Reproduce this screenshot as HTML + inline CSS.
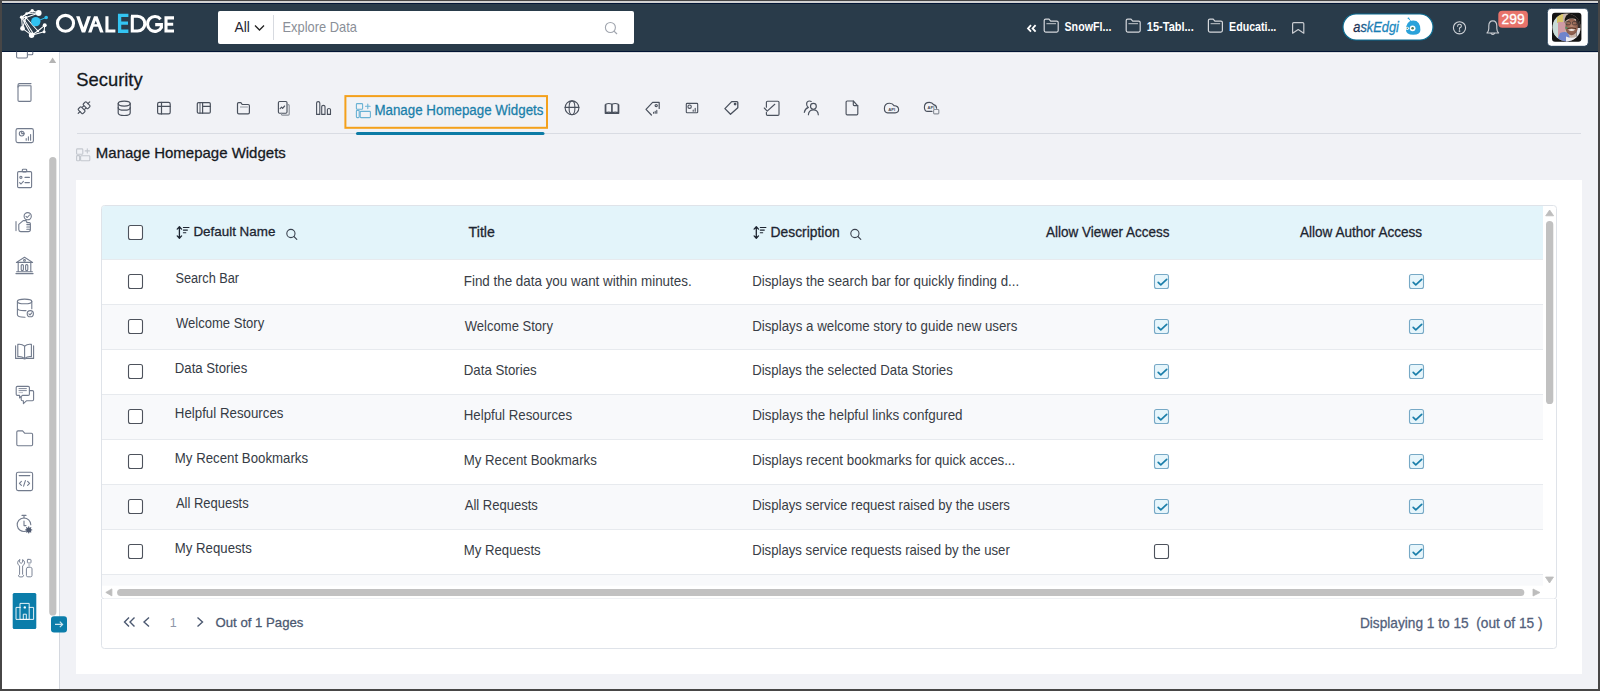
<!DOCTYPE html>
<html><head><meta charset="utf-8"><title>OvalEdge - Manage Homepage Widgets</title>
<style>html,body{margin:0;padding:0;width:1600px;height:691px;overflow:hidden;background:#f1f2f6}
svg{display:block;font-family:"Liberation Sans",sans-serif}</style></head>
<body><svg width="1600" height="691" viewBox="0 0 1600 691">
<rect x="0" y="0" width="1600" height="691" fill="#474646" rx="0" />
<rect x="2" y="1" width="1596" height="2" fill="#d2d2d2" rx="0" />
<rect x="2" y="3" width="1596" height="49" fill="#021535" rx="0" />
<rect x="2" y="4" width="1596" height="47" fill="#293b4a" rx="0" />
<rect x="2" y="52" width="57" height="637" fill="#ffffff" rx="0" />
<rect x="59" y="52" width="1" height="637" fill="#d4d8df" rx="0" />
<rect x="60" y="52" width="1538" height="637" fill="#f1f2f6" rx="0" />
<rect x="60" y="52" width="1538" height="1" fill="#dadcdf" rx="0" />
<rect x="60" y="53" width="1538" height="1" fill="#f8f9fb" rx="0" />
<rect x="218" y="11" width="416" height="33" fill="#ffffff" rx="2" />
<text transform="matrix(0.9731 0 0 1 234.50 31.8)" font-size="14.20" font-weight="400" fill="#1f2430"  xml:space="preserve">All</text>
<path d="M255 25.5 L259.5 30 L264 25.5" fill="none" stroke="#222" stroke-width="1.3"/>
<rect x="273" y="15" width="1" height="25" fill="#d7dae0" rx="0" />
<text transform="matrix(0.9358 0 0 1 282.47 32)" font-size="13.77" font-weight="400" fill="#8a8f98"  xml:space="preserve">Explore Data</text>
<circle cx="610.4" cy="27.5" r="5" fill="none" stroke="#a0a5ae" stroke-width="1.1"/><line x1="614" y1="31.1" x2="617" y2="34" stroke="#a0a5ae" stroke-width="1.2"/>
<text transform="matrix(0.8606 0 0 1 1064.49 30.6)" font-size="12.43" font-weight="700" fill="#ffffff"  xml:space="preserve">SnowFl...</text>
<text transform="matrix(0.8859 0 0 1 1146.84 30.6)" font-size="12.43" font-weight="700" fill="#ffffff"  xml:space="preserve">15-Tabl...</text>
<text transform="matrix(0.8554 0 0 1 1229.11 30.6)" font-size="12.43" font-weight="700" fill="#ffffff"  xml:space="preserve">Educati...</text>
<rect x="1343" y="14" width="90" height="26" fill="#ffffff" rx="13" stroke="#0b6c92" stroke-width="1.2"/>
<defs><linearGradient id="askg" x1="0" y1="0" x2="1" y2="0"><stop offset="0" stop-color="#17203c"/><stop offset="0.14" stop-color="#1a3f6a"/><stop offset="0.3" stop-color="#1a78ae"/><stop offset="1" stop-color="#188ac2"/></linearGradient></defs>
<text transform="matrix(0.9233 0 0 1 1353.24 32)" font-size="13.91" font-weight="400" font-style="italic" stroke="url(#askg)" stroke-width="0.28" fill="url(#askg)"  xml:space="preserve">askEdgi</text>
<rect x="1498.3" y="10.7" width="29.6" height="17.1" fill="#e8736b" rx="4" />
<text transform="matrix(0.9567 0 0 1 1501.51 23.5)" font-size="14.49" font-weight="400" stroke="#ffffff" stroke-width="0.28" fill="#ffffff"  xml:space="preserve">299</text>
<rect x="1547.3" y="8.3" width="41" height="38" rx="4" fill="#ffffff" stroke="#0d2a44" stroke-width="0.8"/>
<rect x="1552" y="12.7" width="29.4" height="29.1" fill="#141414" rx="3" />
<text transform="matrix(1.0072 0 0 1 76.26 85.9)" font-size="18.26" font-weight="400" stroke="#15191e" stroke-width="0.28" fill="#15191e"  xml:space="preserve">Security</text>
<rect x="77" y="133" width="1504" height="1" fill="#d9dce3" rx="0" />
<rect x="356" y="132" width="188.5" height="3" fill="#0d7ca6" rx="1.5" />
<rect x="345.4" y="96.1" width="201.6" height="31.7" fill="none" stroke="#f4a11c" stroke-width="2"/>
<text transform="matrix(0.8861 0 0 1 374.43 114.8)" font-size="15.07" font-weight="400" stroke="#1a7faa" stroke-width="0.28" fill="#1a7faa"  xml:space="preserve">Manage Homepage Widgets</text>
<text transform="matrix(0.9766 0 0 1 95.80 158.1)" font-size="15.36" font-weight="400" stroke="#16191e" stroke-width="0.28" fill="#16191e"  xml:space="preserve">Manage Homepage Widgets</text>
<rect x="76" y="180" width="1506" height="494" fill="#ffffff" rx="0" />
<rect x="101.5" y="205.5" width="1455" height="393.5" rx="3" fill="#ffffff" stroke="#dfe3e9" stroke-width="1"/>
<path d="M102 259 V208.5 Q102 206 104.5 206 H1543 V259 Z" fill="#e3f4fa"/>
<rect x="102" y="304.5" width="1441" height="45" fill="#f8f9fb" rx="0" />
<rect x="102" y="394.5" width="1441" height="45" fill="#f8f9fb" rx="0" />
<rect x="102" y="484.5" width="1441" height="45" fill="#f8f9fb" rx="0" />
<rect x="102" y="574.5" width="1441" height="11.2" fill="#f8f9fb" rx="0" />
<rect x="102" y="259.0" width="1441" height="1" fill="#e7eaee" rx="0" />
<rect x="102" y="304.0" width="1441" height="1" fill="#e7eaee" rx="0" />
<rect x="102" y="349.0" width="1441" height="1" fill="#e7eaee" rx="0" />
<rect x="102" y="394.0" width="1441" height="1" fill="#e7eaee" rx="0" />
<rect x="102" y="439.0" width="1441" height="1" fill="#e7eaee" rx="0" />
<rect x="102" y="484.0" width="1441" height="1" fill="#e7eaee" rx="0" />
<rect x="102" y="529.0" width="1441" height="1" fill="#e7eaee" rx="0" />
<rect x="102" y="574.0" width="1441" height="1" fill="#e7eaee" rx="0" />
<path d="M101.5 599 V645.5 Q101.5 648.5 104.5 648.5 H1553.5 Q1556.5 648.5 1556.5 645.5 V599" fill="#ffffff" stroke="#dfe3e9" stroke-width="1"/>
<path d="M1545.7 215.8 L1553.6 215.8 L1549.65 210 Z" fill="#bdbdbd" stroke="#bdbdbd" stroke-width="0.8" stroke-linejoin="round"/>
<rect x="1546" y="221" width="7.3" height="183" fill="#c1c1c1" rx="3.6" />
<path d="M1545.5 577 L1553.5 577 L1549.5 583 Z" fill="#bdbdbd" stroke="#bdbdbd" stroke-width="0.8" stroke-linejoin="round"/>
<path d="M111.9 588.9 L111.9 595.9 L105.8 592.4 Z" fill="#bdbdbd" stroke="#bdbdbd" stroke-width="0.8" stroke-linejoin="round"/>
<rect x="117.1" y="588.9" width="1407.2" height="7" fill="#c1c1c1" rx="3.5" />
<path d="M1533 589 L1533 596 L1540 592.5 Z" fill="#bdbdbd" stroke="#bdbdbd" stroke-width="0.8" stroke-linejoin="round"/>
<rect x="128.5" y="225.5" width="14" height="14" rx="2" fill="#ffffff" stroke="#4d525c" stroke-width="1.1"/>
<text transform="matrix(1.0066 0 0 1 193.43 236.4)" font-size="13.33" font-weight="400" stroke="#1d2430" stroke-width="0.28" fill="#1d2430"  xml:space="preserve">Default Name</text>
<text transform="matrix(1.0100 0 0 1 468.62 236.9)" font-size="14.06" font-weight="400" stroke="#1d2430" stroke-width="0.28" fill="#1d2430"  xml:space="preserve">Title</text>
<text transform="matrix(1.0046 0 0 1 770.59 236.6)" font-size="13.77" font-weight="400" stroke="#1d2430" stroke-width="0.28" fill="#1d2430"  xml:space="preserve">Description</text>
<text transform="matrix(0.9814 0 0 1 1046.00 236.7)" font-size="13.77" font-weight="400" stroke="#1d2430" stroke-width="0.28" fill="#1d2430"  xml:space="preserve">Allow Viewer Access</text>
<text transform="matrix(0.9858 0 0 1 1300.00 236.7)" font-size="13.77" font-weight="400" stroke="#1d2430" stroke-width="0.28" fill="#1d2430"  xml:space="preserve">Allow Author Access</text>
<rect x="128.5" y="274.5" width="14" height="14" rx="2" fill="#ffffff" stroke="#4d525c" stroke-width="1.1"/>
<text transform="matrix(0.9069 0 0 1 175.39 283.4)" font-size="14.06" font-weight="400" fill="#353b45"  xml:space="preserve">Search Bar</text>
<text transform="matrix(0.9448 0 0 1 463.73 285.7)" font-size="14.20" font-weight="400" fill="#383d46"  xml:space="preserve">Find the data you want within minutes.</text>
<text transform="matrix(0.9351 0 0 1 752.14 285.7)" font-size="14.20" font-weight="400" fill="#383d46"  xml:space="preserve">Displays the search bar for quickly finding d...</text>
<rect x="1154.5" y="274.5" width="14" height="14" rx="2" fill="#e6f5fb" stroke="#77a9c6" stroke-width="1.1"/><path d="M1158.2 282.3 L1160.8 284.9 L1166.7 279.4" fill="none" stroke="#1a7eaa" stroke-width="1.7" stroke-linecap="round" stroke-linejoin="round"/>
<rect x="1409.5" y="274.5" width="14" height="14" rx="2" fill="#e6f5fb" stroke="#77a9c6" stroke-width="1.1"/><path d="M1413.2 282.3 L1415.8 284.9 L1421.7 279.4" fill="none" stroke="#1a7eaa" stroke-width="1.7" stroke-linecap="round" stroke-linejoin="round"/>
<rect x="128.5" y="319.5" width="14" height="14" rx="2" fill="#ffffff" stroke="#4d525c" stroke-width="1.1"/>
<text transform="matrix(0.9290 0 0 1 175.90 328.27)" font-size="14.06" font-weight="400" fill="#353b45"  xml:space="preserve">Welcome Story</text>
<text transform="matrix(0.9185 0 0 1 464.80 330.57)" font-size="14.20" font-weight="400" fill="#383d46"  xml:space="preserve">Welcome Story</text>
<text transform="matrix(0.9371 0 0 1 752.14 330.57)" font-size="14.20" font-weight="400" fill="#383d46"  xml:space="preserve">Displays a welcome story to guide new users</text>
<rect x="1154.5" y="319.5" width="14" height="14" rx="2" fill="#e6f5fb" stroke="#77a9c6" stroke-width="1.1"/><path d="M1158.2 327.3 L1160.8 329.9 L1166.7 324.4" fill="none" stroke="#1a7eaa" stroke-width="1.7" stroke-linecap="round" stroke-linejoin="round"/>
<rect x="1409.5" y="319.5" width="14" height="14" rx="2" fill="#e6f5fb" stroke="#77a9c6" stroke-width="1.1"/><path d="M1413.2 327.3 L1415.8 329.9 L1421.7 324.4" fill="none" stroke="#1a7eaa" stroke-width="1.7" stroke-linecap="round" stroke-linejoin="round"/>
<rect x="128.5" y="364.5" width="14" height="14" rx="2" fill="#ffffff" stroke="#4d525c" stroke-width="1.1"/>
<text transform="matrix(0.9366 0 0 1 174.85 373.14)" font-size="14.06" font-weight="400" fill="#353b45"  xml:space="preserve">Data Stories</text>
<text transform="matrix(0.9349 0 0 1 463.74 375.44)" font-size="14.20" font-weight="400" fill="#383d46"  xml:space="preserve">Data Stories</text>
<text transform="matrix(0.9290 0 0 1 752.14 375.44)" font-size="14.20" font-weight="400" fill="#383d46"  xml:space="preserve">Displays the selected Data Stories</text>
<rect x="1154.5" y="364.5" width="14" height="14" rx="2" fill="#e6f5fb" stroke="#77a9c6" stroke-width="1.1"/><path d="M1158.2 372.3 L1160.8 374.9 L1166.7 369.4" fill="none" stroke="#1a7eaa" stroke-width="1.7" stroke-linecap="round" stroke-linejoin="round"/>
<rect x="1409.5" y="364.5" width="14" height="14" rx="2" fill="#e6f5fb" stroke="#77a9c6" stroke-width="1.1"/><path d="M1413.2 372.3 L1415.8 374.9 L1421.7 369.4" fill="none" stroke="#1a7eaa" stroke-width="1.7" stroke-linecap="round" stroke-linejoin="round"/>
<rect x="128.5" y="409.5" width="14" height="14" rx="2" fill="#ffffff" stroke="#4d525c" stroke-width="1.1"/>
<text transform="matrix(0.9461 0 0 1 174.84 418.01)" font-size="14.06" font-weight="400" fill="#353b45"  xml:space="preserve">Helpful Resources</text>
<text transform="matrix(0.9347 0 0 1 463.74 420.31)" font-size="14.20" font-weight="400" fill="#383d46"  xml:space="preserve">Helpful Resources</text>
<text transform="matrix(0.9461 0 0 1 752.13 420.31)" font-size="14.20" font-weight="400" fill="#383d46"  xml:space="preserve">Displays the helpful links confgured</text>
<rect x="1154.5" y="409.5" width="14" height="14" rx="2" fill="#e6f5fb" stroke="#77a9c6" stroke-width="1.1"/><path d="M1158.2 417.3 L1160.8 419.9 L1166.7 414.4" fill="none" stroke="#1a7eaa" stroke-width="1.7" stroke-linecap="round" stroke-linejoin="round"/>
<rect x="1409.5" y="409.5" width="14" height="14" rx="2" fill="#e6f5fb" stroke="#77a9c6" stroke-width="1.1"/><path d="M1413.2 417.3 L1415.8 419.9 L1421.7 414.4" fill="none" stroke="#1a7eaa" stroke-width="1.7" stroke-linecap="round" stroke-linejoin="round"/>
<rect x="128.5" y="454.5" width="14" height="14" rx="2" fill="#ffffff" stroke="#4d525c" stroke-width="1.1"/>
<text transform="matrix(0.9424 0 0 1 174.84 462.88)" font-size="14.06" font-weight="400" fill="#353b45"  xml:space="preserve">My Recent Bookmarks</text>
<text transform="matrix(0.9321 0 0 1 463.74 465.18)" font-size="14.20" font-weight="400" fill="#383d46"  xml:space="preserve">My Recent Bookmarks</text>
<text transform="matrix(0.9375 0 0 1 752.13 465.18)" font-size="14.20" font-weight="400" fill="#383d46"  xml:space="preserve">Displays recent bookmarks for quick acces...</text>
<rect x="1154.5" y="454.5" width="14" height="14" rx="2" fill="#e6f5fb" stroke="#77a9c6" stroke-width="1.1"/><path d="M1158.2 462.3 L1160.8 464.9 L1166.7 459.4" fill="none" stroke="#1a7eaa" stroke-width="1.7" stroke-linecap="round" stroke-linejoin="round"/>
<rect x="1409.5" y="454.5" width="14" height="14" rx="2" fill="#e6f5fb" stroke="#77a9c6" stroke-width="1.1"/><path d="M1413.2 462.3 L1415.8 464.9 L1421.7 459.4" fill="none" stroke="#1a7eaa" stroke-width="1.7" stroke-linecap="round" stroke-linejoin="round"/>
<rect x="128.5" y="499.5" width="14" height="14" rx="2" fill="#ffffff" stroke="#4d525c" stroke-width="1.1"/>
<text transform="matrix(0.9236 0 0 1 175.90 507.75)" font-size="14.06" font-weight="400" fill="#353b45"  xml:space="preserve">All Requests</text>
<text transform="matrix(0.9167 0 0 1 464.80 510.05)" font-size="14.20" font-weight="400" fill="#383d46"  xml:space="preserve">All Requests</text>
<text transform="matrix(0.9294 0 0 1 752.14 510.05)" font-size="14.20" font-weight="400" fill="#383d46"  xml:space="preserve">Displays service request raised by the users</text>
<rect x="1154.5" y="499.5" width="14" height="14" rx="2" fill="#e6f5fb" stroke="#77a9c6" stroke-width="1.1"/><path d="M1158.2 507.3 L1160.8 509.9 L1166.7 504.4" fill="none" stroke="#1a7eaa" stroke-width="1.7" stroke-linecap="round" stroke-linejoin="round"/>
<rect x="1409.5" y="499.5" width="14" height="14" rx="2" fill="#e6f5fb" stroke="#77a9c6" stroke-width="1.1"/><path d="M1413.2 507.3 L1415.8 509.9 L1421.7 504.4" fill="none" stroke="#1a7eaa" stroke-width="1.7" stroke-linecap="round" stroke-linejoin="round"/>
<rect x="128.5" y="544.5" width="14" height="14" rx="2" fill="#ffffff" stroke="#4d525c" stroke-width="1.1"/>
<text transform="matrix(0.9393 0 0 1 174.84 552.62)" font-size="14.06" font-weight="400" fill="#353b45"  xml:space="preserve">My Requests</text>
<text transform="matrix(0.9297 0 0 1 463.74 554.92)" font-size="14.20" font-weight="400" fill="#383d46"  xml:space="preserve">My Requests</text>
<text transform="matrix(0.9286 0 0 1 752.14 554.92)" font-size="14.20" font-weight="400" fill="#383d46"  xml:space="preserve">Displays service requests raised by the user</text>
<rect x="1154.5" y="544.5" width="14" height="14" rx="2" fill="#ffffff" stroke="#4d525c" stroke-width="1.1"/>
<rect x="1409.5" y="544.5" width="14" height="14" rx="2" fill="#e6f5fb" stroke="#77a9c6" stroke-width="1.1"/><path d="M1413.2 552.3 L1415.8 554.9 L1421.7 549.4" fill="none" stroke="#1a7eaa" stroke-width="1.7" stroke-linecap="round" stroke-linejoin="round"/>
<text transform="matrix(0.9790 0 0 1 215.47 626.5)" font-size="13.48" font-weight="400" stroke="#4b5870" stroke-width="0.28" fill="#4b5870"  xml:space="preserve">Out of 1 Pages</text>
<text transform="matrix(0.9292 0 0 1 169.72 626.5)" font-size="13.48" font-weight="400" fill="#8e97a8"  xml:space="preserve">1</text>
<text transform="matrix(0.9844 0 0 1 1359.90 627.75)" font-size="13.91" font-weight="400" stroke="#52607a" stroke-width="0.28" fill="#52607a"  xml:space="preserve">Displaying 1 to 15  (out of 15 )</text>
<path d="M129 617.5 L124.5 622 L129 626.5 M134.5 617.5 L130 622 L134.5 626.5" fill="none" stroke="#4b5870" stroke-width="1.4"/>
<path d="M149 617.5 L144 622 L149 626.5" fill="none" stroke="#4b5870" stroke-width="1.4"/>
<path d="M197.5 617.5 L202.5 622 L197.5 626.5" fill="none" stroke="#4b5870" stroke-width="1.4"/>
<g stroke="#ffffff" stroke-width="1.05" stroke-linecap="round"><line x1="21.5" y1="17.2" x2="22.5" y2="28.4"/><line x1="22.5" y1="28.4" x2="31.6" y2="35.2"/><line x1="21.5" y1="17.2" x2="31.6" y2="35.2"/><line x1="25.9" y1="17.5" x2="37.9" y2="31.0"/><line x1="32.2" y1="10.7" x2="38.7" y2="13.0"/><line x1="26.7" y1="13.6" x2="32.2" y2="10.7"/><line x1="25.9" y1="17.5" x2="38.7" y2="13.0"/><line x1="31.6" y1="35.2" x2="44.1" y2="31.8"/><line x1="37.9" y1="31.0" x2="44.7" y2="25.3"/><line x1="44.7" y1="25.3" x2="44.1" y2="31.8"/><line x1="21.5" y1="17.2" x2="26.7" y2="13.6"/><line x1="26.7" y1="13.6" x2="38.7" y2="13.0"/><line x1="21.5" y1="17.2" x2="25.9" y2="17.5"/><line x1="31.6" y1="35.2" x2="37.9" y2="31.0"/><line x1="22.5" y1="28.4" x2="25.9" y2="17.5"/><line x1="32.2" y1="10.7" x2="21.5" y2="17.2"/><line x1="23.5" y1="18.5" x2="33.5" y2="34.0"/></g>
<g fill="#ffffff"><circle cx="38.7" cy="13.0" r="2.9"/><circle cx="32.2" cy="10.7" r="1.7"/><circle cx="26.7" cy="13.6" r="1.4"/><circle cx="21.5" cy="17.2" r="1.6"/><circle cx="25.9" cy="17.5" r="1.4"/><circle cx="22.5" cy="28.4" r="2.4"/><circle cx="31.6" cy="35.2" r="2.7"/><circle cx="44.7" cy="25.3" r="2.0"/><circle cx="44.1" cy="31.8" r="1.5"/><circle cx="37.9" cy="31.0" r="1.2"/></g>
<line x1="35.8" y1="21.6" x2="46.2" y2="17.5" stroke="#30c2f2" stroke-width="1"/><circle cx="35.8" cy="21.6" r="4.7" fill="#30c2f2"/><circle cx="46.2" cy="17.5" r="1.8" fill="#30c2f2"/>
<g fill="none" stroke="#ffffff" stroke-width="3.1" stroke-linejoin="miter"><ellipse cx="65.5" cy="23.3" rx="8.05" ry="7.95"/><path d="M106.95 16.3 V30.95 H115.4"/><path d="M132.3 16.3 V30.95 H137.5 A7.3 7.3 0 0 0 137.5 16.3 H131"/><path d="M160.6 19.2 A7.4 7.4 0 1 0 161.4 27.5 V24.6 H155.2"/><path d="M174 17.85 H166 V30.95 H174 M166 24.3 H173.2"/></g>
<path d="M76.1 16.3 H79.6 L83.5 27.2 L87.4 16.3 H90.9 L85.2 32.5 H81.8 Z" fill="#fff"/><path d="M88.1 32.5 L94 16.3 H97.5 L103.6 32.5 H100.1 L95.75 20.6 L91.5 32.5 Z" fill="#fff"/><rect x="91.6" y="24.2" width="8.3" height="2.5" fill="#fff"/>
<path d="M128.4 15.35 H119.6 V31.25 H128.4 M119.6 23.1 H128" fill="none" stroke="#33c4f2" stroke-width="3.3"/>
<path d="M1031 25.2 L1028 28.4 L1031 31.6 M1035.6 25.2 L1032.6 28.4 L1035.6 31.6" fill="none" stroke="#fff" stroke-width="1.8"/>
<g fill="none" stroke="#d5d8dc" stroke-width="1.2" stroke-linecap="round" stroke-linejoin="round" ><path d="M1045.7 19.1 H1049.0 L1050.7 21.1 H1056.7 Q1058.2 21.1 1058.2 22.6 V30.6 Q1058.2 32.1 1056.7 32.1 H1045.7 Q1044.2 32.1 1044.2 30.6 V20.6 Q1044.2 19.1 1045.7 19.1 Z"/><line x1="1046.8" y1="23.700000000000003" x2="1055.6000000000001" y2="23.700000000000003" stroke-width="0.9"/></g>
<g fill="none" stroke="#d5d8dc" stroke-width="1.2" stroke-linecap="round" stroke-linejoin="round" ><path d="M1127.7 19.1 H1131.0 L1132.7 21.1 H1138.7 Q1140.2 21.1 1140.2 22.6 V30.6 Q1140.2 32.1 1138.7 32.1 H1127.7 Q1126.2 32.1 1126.2 30.6 V20.6 Q1126.2 19.1 1127.7 19.1 Z"/><line x1="1128.8" y1="23.700000000000003" x2="1137.6000000000001" y2="23.700000000000003" stroke-width="0.9"/></g>
<g fill="none" stroke="#d5d8dc" stroke-width="1.2" stroke-linecap="round" stroke-linejoin="round" ><path d="M1209.9 19.1 H1213.2 L1214.9 21.1 H1220.9 Q1222.4 21.1 1222.4 22.6 V30.6 Q1222.4 32.1 1220.9 32.1 H1209.9 Q1208.4 32.1 1208.4 30.6 V20.6 Q1208.4 19.1 1209.9 19.1 Z"/><line x1="1211.0" y1="23.700000000000003" x2="1219.8000000000002" y2="23.700000000000003" stroke-width="0.9"/></g>
<g fill="none" stroke="#c9ccd1" stroke-width="1.2" stroke-linecap="round" stroke-linejoin="round" ><path d="M1292.6 23.8 Q1292.6 22.6 1293.8 22.6 H1302.6 Q1303.8 22.6 1303.8 23.8 V33.2 L1298.2 29.6 L1292.6 33.2 Z"/></g>
<path d="M1406 30 Q1406 20.5 1413.2 20.5 Q1420.4 20.5 1420.4 30 Q1420.4 34.8 1413.2 34.8 Q1406 34.8 1406 30 Z" fill="#2aa2da"/><line x1="1410.6" y1="20.8" x2="1408.6" y2="18.4" stroke="#2aa2da" stroke-width="0.9"/><circle cx="1408.5" cy="18.3" r="0.9" fill="#2aa2da"/><circle cx="1412.6" cy="28.3" r="2.9" fill="#fff"/><circle cx="1412.6" cy="28.3" r="1.3" fill="#4a7a5a"/><circle cx="1407.3" cy="28.3" r="1.6" fill="#fff"/><circle cx="1407.3" cy="28.3" r="0.7" fill="#4a7a5a"/>
<g fill="none" stroke="#d0d3d8" stroke-width="1.1" stroke-linecap="round" stroke-linejoin="round" ><circle cx="1459.5" cy="27.8" r="6.1"/><path d="M1457.6 26.2 Q1457.7 24.3 1459.5 24.3 Q1461.4 24.3 1461.4 26 Q1461.4 27.2 1459.5 28 V29.2" /><circle cx="1459.5" cy="31.1" r="0.35" fill="#d0d3d8"/></g>
<g fill="none" stroke="#c8cbd0" stroke-width="1.15" stroke-linecap="round" stroke-linejoin="round" ><path d="M1487 33 H1498.6 Q1496.8 31.2 1496.8 28.5 V26 Q1496.8 20.9 1492.8 20.9 Q1488.8 20.9 1488.8 26 V28.5 Q1488.8 31.2 1487 33 Z"/><path d="M1491 33.4 Q1492.8 35.4 1494.6 33.4"/></g>
<defs><clipPath id="avc"><circle cx="1566.6" cy="27.4" r="14"/></clipPath><radialGradient id="face" cx="0.5" cy="0.45" r="0.6"><stop offset="0" stop-color="#b98670"/><stop offset="1" stop-color="#7d5040"/></radialGradient></defs><g clip-path="url(#avc)"><rect x="1552" y="12.7" width="30" height="30" fill="#c9b4a8"/><rect x="1552" y="12.7" width="6" height="30" fill="#c8dcd8"/><rect x="1557" y="14" width="6" height="9" fill="#d9c66a"/><rect x="1558" y="22" width="7" height="14" fill="#cf9aa4"/><rect x="1576" y="12.7" width="6" height="30" fill="#3a3230"/><path d="M1556 43 L1560 33 Q1565 31 1568 33 L1572 43 Z" fill="#6f84cc"/><rect x="1576.5" y="28" width="4" height="9" fill="#e6e6ea"/><ellipse cx="1571.6" cy="27" rx="6.3" ry="8.2" fill="url(#face)"/><path d="M1564.6 23 Q1564 13.6 1571.8 13.6 Q1580 13.6 1579.2 23 Q1577.6 18.2 1571.8 18.4 Q1566 18.4 1564.6 23 Z" fill="#1c1816"/><rect x="1565.8" y="21.6" width="4.6" height="3.2" rx="1.2" fill="none" stroke="#3a3030" stroke-width="0.7"/><rect x="1572.4" y="21.6" width="4.6" height="3.2" rx="1.2" fill="none" stroke="#3a3030" stroke-width="0.7"/><path d="M1568 29.4 Q1571.6 28.6 1575.4 29.4 Q1571.6 32.6 1568 29.4 Z" fill="#ece6e2"/><path d="M1567.2 28.6 Q1571.6 27 1576 28.6" fill="none" stroke="#4a2c22" stroke-width="0.9"/><path d="M1566 36.6 Q1571.6 39 1577 36.6 L1577 43 H1566 Z" fill="#ececf0"/><rect x="1565.4" y="27.2" width="2" height="1.4" fill="#3a9a6a"/></g>
<g fill="none" stroke="#4a515d" stroke-width="1.15" stroke-linecap="round" stroke-linejoin="round" ><line x1="78.2" y1="113.3" x2="80" y2="111.5"/><line x1="87.8" y1="103.7" x2="89.7" y2="101.8"/><rect x="-3.3" y="-2.1" width="6.6" height="4.2" rx="1" transform="translate(81.6 110.3) rotate(45)"/><rect x="-3.3" y="-2.1" width="6.6" height="4.2" rx="1" transform="translate(86.6 105.3) rotate(45)"/><line x1="82.4" y1="107.2" x2="83.6" y2="106"/><line x1="84.6" y1="109.4" x2="85.8" y2="108.2"/></g>
<g fill="none" stroke="#4a515d" stroke-width="1.2" stroke-linecap="round" stroke-linejoin="round" ><ellipse cx="124.2" cy="103.6" rx="6.0" ry="2.5"/><path d="M118.2 103.6 V113 Q118.2 115.5 124.2 115.5 Q130.2 115.5 130.2 113 V103.6"/><path d="M118.2 107.7 Q118.2 110.2 124.2 110.2 Q130.2 110.2 130.2 107.7"/></g>
<g fill="none" stroke="#4a515d" stroke-width="1.2" stroke-linecap="round" stroke-linejoin="round" ><rect x="157.6" y="102.3" width="12.6" height="11.6" rx="1.6"/><line x1="157.6" y1="106.4" x2="170.2" y2="106.4"/><line x1="161.5" y1="102.3" x2="161.5" y2="113.9"/></g>
<g fill="none" stroke="#4a515d" stroke-width="1.2" stroke-linecap="round" stroke-linejoin="round" ><rect x="197.3" y="102.6" width="13" height="10.6" rx="1.2"/><line x1="202.6" y1="106.4" x2="210.3" y2="106.4"/><line x1="202.6" y1="102.6" x2="202.6" y2="113.2"/><line x1="200" y1="102.6" x2="200" y2="113.2" stroke-width="0.9"/></g>
<g fill="none" stroke="#4a515d" stroke-width="1.2" stroke-linecap="round" stroke-linejoin="round" ><path d="M238.6 102.7 H240.9 L242.2 104.5 H248.2 Q249.4 104.5 249.4 105.7 V112.6 Q249.4 113.9 248.1 113.9 H238.8 Q237.5 113.9 237.5 112.6 V103.8 Q237.5 102.7 238.6 102.7 Z"/><line x1="240.4" y1="107" x2="247.5" y2="107" stroke="#8a9099" stroke-width="0.9"/></g>
<g fill="none" stroke="#4a515d" stroke-width="1.15" stroke-linecap="round" stroke-linejoin="round" ><rect x="278.4" y="101.5" width="8.6" height="11.7" rx="1.2"/><path d="M287.4 104.6 H288.2 Q289.2 104.6 289.2 105.6 V114.2 Q289.2 115.1 288.2 115.1 H282.4 Q281.4 115.1 281.4 114.2 V113.4" stroke="#8a9099"/><path d="M280.1 108.6 L281.6 107.2 L282.6 108.3 L284.6 106"/></g>
<g fill="none" stroke="#4a515d" stroke-width="1.1" stroke-linecap="round" stroke-linejoin="round" ><path d="M316.6 114.4 V102.9 Q316.6 101.6 318.2 101.6 Q319.8 101.6 319.8 102.9 V114.4 Z"/><path d="M321.7 114.4 V106.6 Q321.7 105.4 323.35 105.4 Q325 105.4 325 106.6 V114.4 Z"/><path d="M327.4 114.4 V109.6 Q327.4 108.5 328.95 108.5 Q330.5 108.5 330.5 109.6 V114.4 Z"/></g>
<g fill="none" stroke="#6ab2d4" stroke-width="1.1" stroke-linecap="round" stroke-linejoin="round" ><rect x="356.4" y="103.6" width="6.2" height="5.6" rx="0.8"/><rect x="356.4" y="110.4" width="2.8" height="7.2" rx="0.8"/><rect x="360.2" y="111.4" width="10.2" height="6.2" rx="0.8"/><path d="M367.8 104 V108.6 M365.5 106.3 H370.1"/></g>
<g fill="none" stroke="#c3c7ce" stroke-width="1.1" stroke-linecap="round" stroke-linejoin="round" ><rect x="76.6" y="148.9" width="6.2" height="5.4" rx="0.8"/><rect x="76.6" y="155.6" width="3" height="5.2" rx="0.8"/><rect x="80.6" y="155.8" width="9.2" height="5" rx="0.8"/><path d="M87.3 148.8 V153 M85.2 150.9 H89.4"/></g>
<g fill="none" stroke="#4a515d" stroke-width="1.1" stroke-linecap="round" stroke-linejoin="round" ><circle cx="572" cy="107.8" r="6.9"/><ellipse cx="572" cy="107.8" rx="2.9" ry="6.9"/><line x1="565.1" y1="107.4" x2="578.9" y2="107.4"/></g>
<g fill="none" stroke="#4a515d" stroke-width="1.2" stroke-linecap="round" stroke-linejoin="round" ><path d="M605.8 104.2 Q608.6 102.8 611.9 104.2 V112.6 Q608.6 111.6 605.8 112.6 Z"/><path d="M618.2 104.2 Q615.4 102.8 611.9 104.2 V112.6 Q615.4 111.6 618.2 112.6 Z"/><path d="M605.3 104.8 V113.3 H618.7 V104.8" stroke-width="1.3"/></g>
<g fill="none" stroke="#4a515d" stroke-width="1.2" stroke-linecap="round" stroke-linejoin="round" ><path d="M651.4 115 L646 109.4 L652.6 102.4 H659.2 V108.4"/><circle cx="656.2" cy="105.6" r="1.1"/><path d="M653.6 113.2 V112.2 M655.2 113.2 V111.3 M656.8 113.2 V110.4" stroke-width="1.1"/></g>
<g fill="none" stroke="#4a515d" stroke-width="1.1" stroke-linecap="round" stroke-linejoin="round" ><rect x="686.3" y="103.4" width="11.4" height="9.4" rx="0.8"/><circle cx="689.6" cy="106.7" r="1.7"/><path d="M693.2 111.2 V110 M695.2 111.2 V108.3"/></g>
<g fill="none" stroke="#4a515d" stroke-width="1.3" stroke-linecap="round" stroke-linejoin="round" ><path d="M731.7 101.6 H736.8 Q737.8 101.6 737.8 102.6 V107.7 L730.5 114.3 L724.9 108.6 Z"/><circle cx="735.1" cy="104.1" r="0.75" fill="#4a515d"/></g>
<g fill="none" stroke="#4a515d" stroke-width="1.15" stroke-linecap="round" stroke-linejoin="round" ><path d="M766.4 107.2 V102.3 Q766.4 101.2 767.5 101.2 H777.9 Q779 101.2 779 102.3 V114.3 Q779 115.4 777.9 115.4 H767.5 Q766.4 115.4 766.4 114.3 V112.4"/><path d="M764.3 108 L767.2 111.1 L774.8 104.3"/></g>
<g fill="none" stroke="#4a515d" stroke-width="1.15" stroke-linecap="round" stroke-linejoin="round" ><circle cx="813.4" cy="106.3" r="2.9"/><path d="M808.4 114.8 Q808.8 109.8 813.4 109.8 Q818 109.8 818.3 114.8"/><path d="M811.2 101.4 Q810.4 101 809.6 101 Q806.6 101 806.6 104 Q806.6 106.4 808.4 107.4 Q805 108.6 804.3 112.4"/></g>
<g fill="none" stroke="#4a515d" stroke-width="1.15" stroke-linecap="round" stroke-linejoin="round" ><path d="M847.2 101 H853.3 L857.8 105.8 V113.8 Q857.8 114.9 856.7 114.9 H847.2 Q846.1 114.9 846.1 113.8 V102.1 Q846.1 101 847.2 101 Z"/><path d="M853.3 101 V104.7 Q853.3 105.6 854.2 105.6 H857.8"/></g>
<g fill="none" stroke="#4a515d" stroke-width="1.15" stroke-linecap="round" stroke-linejoin="round" ><path d="M887.6 112.8 Q884.4 112.8 884.4 108.6 Q884.4 103.2 889.6 103.2 Q892.6 103.2 894 105.6 Q898.6 106 898.6 109.6 Q898.6 112.8 895.2 112.8 Z"/></g>
<text x="888.3" y="111.1" font-size="4.2" font-weight="700" fill="#434a56" font-family="Liberation Sans">API</text>
<g fill="none" stroke="#4a515d" stroke-width="1.15" stroke-linecap="round" stroke-linejoin="round" ><path d="M932 111.4 H927.6 Q924.4 111.4 924.4 107.2 Q924.4 102.3 929.4 102.3 Q932.2 102.3 933.6 104.6 Q936.4 105 936.6 108.2"/><rect x="933.6" y="109.5" width="5.2" height="4.4" rx="0.8" stroke="#8a9099"/></g>
<text x="927.6" y="109.4" font-size="4" font-weight="700" fill="#434a56" font-family="Liberation Sans">API</text>
<g fill="none" stroke="#1d2430" stroke-width="1.3" stroke-linecap="round" stroke-linejoin="round" ><path d="M179.4 226.8 V238.2 M177.20000000000002 229.1 L179.4 226.8 L181.60000000000002 229.1 M177.20000000000002 235.9 L179.4 238.2 L181.60000000000002 235.9"/><path d="M183.4 227.5 H189.0 M183.4 230.1 H187.4 M183.4 232.7 H185.8" stroke-width="1.1"/></g>
<g fill="none" stroke="#3c4350" stroke-width="1.1" stroke-linecap="round" stroke-linejoin="round" ><circle cx="290.9" cy="233.5" r="4.1"/><line x1="293.9" y1="236.5" x2="296.79999999999995" y2="239.3"/></g>
<g fill="none" stroke="#1d2430" stroke-width="1.3" stroke-linecap="round" stroke-linejoin="round" ><path d="M756.3000000000001 226.8 V238.2 M754.1 229.1 L756.3000000000001 226.8 L758.5 229.1 M754.1 235.9 L756.3000000000001 238.2 L758.5 235.9"/><path d="M760.3000000000001 227.5 H765.9000000000001 M760.3000000000001 230.1 H764.3000000000001 M760.3000000000001 232.7 H762.7" stroke-width="1.1"/></g>
<g fill="none" stroke="#3c4350" stroke-width="1.1" stroke-linecap="round" stroke-linejoin="round" ><circle cx="854.9" cy="233.5" r="4.1"/><line x1="857.9" y1="236.5" x2="860.8" y2="239.3"/></g>
<g fill="none" stroke="#727b8d" stroke-width="1.1" stroke-linecap="round" stroke-linejoin="round" ><path d="M16.6 52 V56.8 Q16.6 58 17.8 58 H26.2 Q27.4 58 27.4 56.8 V52 M27.4 54.8 H31.8 Q32.8 54.8 32.8 53.8 V52"/></g>
<path d="M49 63 L56.2 63 L52.6 57.4 Z" fill="#b4b4b4"/>
<rect x="49.2" y="157" width="7.2" height="458.5" rx="3.6" fill="#c2c2c2"/>
<g fill="none" stroke="#727b8d" stroke-width="1.1" stroke-linecap="round" stroke-linejoin="round" ><path d="M19.4 83.6 H31 M19.2 85.8 H31 M31 85.8 V100.3 Q31 101.4 29.9 101.4 H19.2 Q18 101.4 18 100.3 V85.1 Q18 83.6 19.4 83.6"/><path d="M19.2 85.8 Q18 85.8 18 87"/></g>
<g fill="none" stroke="#727b8d" stroke-width="1.1" stroke-linecap="round" stroke-linejoin="round" ><rect x="16" y="128.6" width="17.4" height="14" rx="1.8"/><circle cx="21.7" cy="133.6" r="2.4"/><path d="M21.7 131.2 V133.6 H24.1"/><path d="M26.2 140.2 V138.6 M28.4 140.2 V136.8 M30.6 140.2 V134.6"/></g>
<g fill="none" stroke="#727b8d" stroke-width="1.1" stroke-linecap="round" stroke-linejoin="round" ><rect x="17.6" y="171.6" width="14" height="16" rx="1.2"/><rect x="22.3" y="169.3" width="4.4" height="2.6" rx="0.8"/><circle cx="20.9" cy="177.3" r="1.1"/><path d="M25 177.4 H29.4 M25 182.6 H29.4 M19.6 182.6 L21 184 L23.4 181.4"/></g>
<g fill="none" stroke="#727b8d" stroke-width="1.1" stroke-linecap="round" stroke-linejoin="round" ><circle cx="27.7" cy="216.2" r="3.6"/><path d="M26 216.3 L27.3 217.5 L29.5 215"/><path d="M16 221.6 V230.6 M18.8 229.6 V224.4 L23.2 220.6 H25.6 Q26.8 220.6 26.8 221.8 V222.6 H29.2 Q30.4 222.6 30.4 223.8 V229.4 Q30.4 231.6 28.2 231.6 H20.6 Q18.8 231.6 18.8 229.6 M26.8 224.6 H30.4 M26.8 227 H30.4 M26.8 229.2 H30.2"/></g>
<g fill="none" stroke="#727b8d" stroke-width="1.1" stroke-linecap="round" stroke-linejoin="round" ><path d="M16.4 262.4 L24.5 257.2 L32.6 262.4 Z"/><circle cx="24.5" cy="260.4" r="0.9"/><path d="M18.2 262.4 V271.6 M30.8 262.4 V271.6 M15.9 273.6 H33.1 M16.6 271.8 H32.4"/><rect x="21.2" y="264.6" width="2.2" height="6" rx="1"/><rect x="25.6" y="264.6" width="2.2" height="6" rx="1"/></g>
<g fill="none" stroke="#727b8d" stroke-width="1.1" stroke-linecap="round" stroke-linejoin="round" ><ellipse cx="24.6" cy="301.4" rx="7.2" ry="2.3"/><path d="M17.4 301.4 V314.8 Q17.4 317.2 24.6 317.2 H25 M31.8 301.4 V308.8 M17.4 308.2 Q17.4 310.6 24.6 310.6 H26"/><circle cx="30.3" cy="313.7" r="3.1"/><path d="M28.9 313.8 L30 314.9 L31.8 312.8"/></g>
<g fill="none" stroke="#727b8d" stroke-width="1.1" stroke-linecap="round" stroke-linejoin="round" ><path d="M24.6 346.2 Q21.6 343.6 17.8 344.4 V356.6 Q21.4 356 24.6 358.4 Q27.8 356 31.4 356.6 V344.4 Q27.6 343.6 24.6 346.2 Z"/><path d="M24.6 346.2 V358"/><path d="M15.6 345.8 V358.4 H22.8 Q24.6 359.6 26.4 358.4 H33.6 V345.8"/></g>
<g fill="none" stroke="#727b8d" stroke-width="1.1" stroke-linecap="round" stroke-linejoin="round" ><path d="M17.4 386.4 H28.2 Q29.4 386.4 29.4 387.6 V394.2 Q29.4 395.4 28.2 395.4 H22.4 L19.6 398 V395.4 H17.4 Q16.2 395.4 16.2 394.2 V387.6 Q16.2 386.4 17.4 386.4 Z"/><path d="M29.4 390.6 H32.4 Q33.6 390.6 33.6 391.8 V399.6 Q33.6 400.8 32.4 400.8 H26.4 L23.4 403.6 V400.8 H22.4 Q21.2 400.8 21.2 399.6 V397.2"/><path d="M19 388.6 H26.4 M19 390.6 H26.4" stroke-width="0.9"/><path d="M19 392.6 H22.6" stroke-width="0.9" stroke="#b0b6c0"/></g>
<g fill="none" stroke="#727b8d" stroke-width="1.1" stroke-linecap="round" stroke-linejoin="round" ><path d="M18 430.9 H22.6 L24.6 433.2 H31.4 Q32.6 433.2 32.6 434.4 V444.6 Q32.6 445.8 31.4 445.8 H18 Q16.8 445.8 16.8 444.6 V432.1 Q16.8 430.9 18 430.9 Z"/></g>
<g fill="none" stroke="#727b8d" stroke-width="1.1" stroke-linecap="round" stroke-linejoin="round" ><rect x="16.4" y="472.2" width="16.2" height="18.4" rx="1.8"/><path d="M19.2 475.6 H29.8"/><path d="M21.4 481.4 L19.4 483.4 L21.4 485.4 M27.6 481.4 L29.6 483.4 L27.6 485.4 M25.4 480.6 L23.6 486.2"/></g>
<g fill="none" stroke="#727b8d" stroke-width="1.1" stroke-linecap="round" stroke-linejoin="round" ><path d="M30.8 524.8 A6.8 6.8 0 1 0 25.4 531.4"/><path d="M22 515.4 H26 M24 515.6 V518"/><path d="M24 521 V525.6 H26"/></g>
<g fill="#4f5a70"><circle cx="28.7" cy="529.9" r="2.5"/><rect x="28.2" y="526.4" width="1" height="7" transform="rotate(0 28.7 529.9)"/><rect x="28.2" y="526.4" width="1" height="7" transform="rotate(45 28.7 529.9)"/><rect x="28.2" y="526.4" width="1" height="7" transform="rotate(90 28.7 529.9)"/><rect x="28.2" y="526.4" width="1" height="7" transform="rotate(135 28.7 529.9)"/></g>
<g fill="none" stroke="#7c8597" stroke-width="1.0" stroke-linecap="round" stroke-linejoin="round" ><path d="M19.6 559.6 Q17.6 560.6 17.6 562.8 Q17.6 564.8 19.6 565.8 V574.4 Q18.4 575.2 18.4 576 Q18.6 577 21 577 Q23.6 577 23.6 575.8 Q23.6 575 22.6 574.4 V565.8 Q24.6 564.8 24.6 562.8 Q24.6 560.6 22.6 559.6 V562.2 L21.1 563.4 L19.6 562.2 Z"/><rect x="27.4" y="559.4" width="3.6" height="3.6" rx="0.6"/><rect x="26.4" y="567.4" width="5.6" height="9.4" rx="1.4"/></g>
<rect x="28.2" y="563" width="2" height="4.4" fill="#c6cbd3"/>
<rect x="12.7" y="593" width="23.6" height="36.1" rx="1.5" fill="#0b7daa"/>
<g fill="none" stroke="#ffffff" stroke-width="0.9" stroke-linecap="round" stroke-linejoin="round" ><path d="M20.4 607.4 H16 V619.4 H33.6 V607.4 H29.2"/><rect x="20.4" y="603.4" width="8.8" height="16"/><path d="M23.3 619.4 V614.2 H26.3 V619.4"/></g>
<circle cx="24.8" cy="607.4" r="1.2" fill="#ffffff"/>
<rect x="51" y="616.3" width="16" height="16.2" rx="3" fill="#0b7daa"/><path d="M55 624.4 H62.5 M59.8 621.6 L62.6 624.4 L59.8 627.2" fill="none" stroke="#cfe6f0" stroke-width="1.2"/>
</svg></body></html>
